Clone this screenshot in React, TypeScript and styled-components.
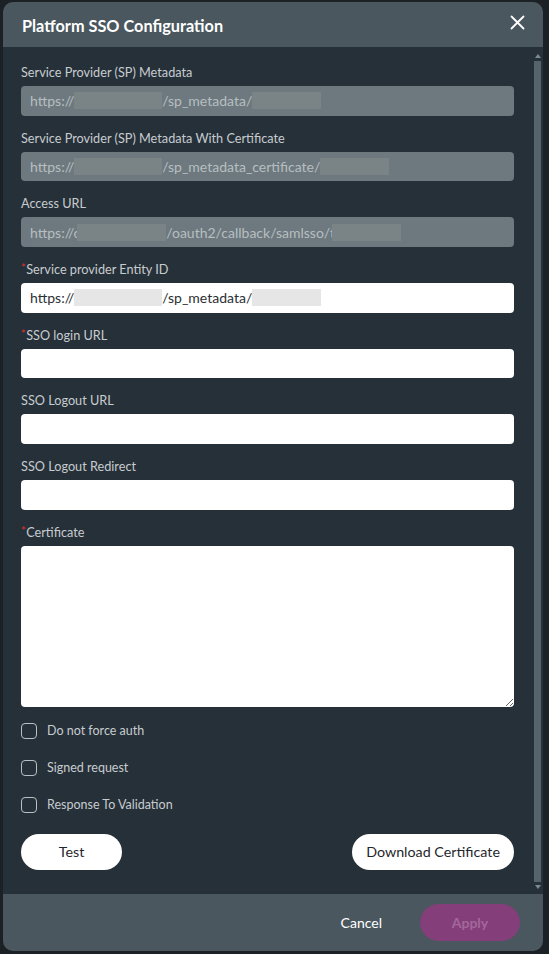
import React from 'react';
import styled, { createGlobalStyle } from 'styled-components';

const GlobalStyle = createGlobalStyle`
  html, body {
    margin: 0;
    padding: 0;
    background-color: #1b2125;
    font-family: Lato, 'Open Sans', 'Liberation Sans', sans-serif;
  }
  * {
    box-sizing: border-box;
  }
`;

interface FieldItem {
  label: string;
  required?: boolean;
  parts?: (string | number)[];
  disabled?: boolean;
}

// numbers stand for blurred-out segments (their width in px, negative = overlaps the letter before)
const fields: FieldItem[] = [
  { label: 'Service Provider (SP) Metadata', disabled: true, parts: ['https://', 88, '/sp_metadata/', 69] },
  {
    label: 'Service Provider (SP) Metadata With Certificate',
    disabled: true,
    parts: ['https://', 88, '/sp_metadata_certificate/', 69],
  },
  { label: 'Access URL', disabled: true, parts: ['https://c', -89, '/oauth2/callback/samlsso/t', -69] },
  { label: 'Service provider Entity ID', required: true, parts: ['https://', 88, '/sp_metadata/', 69] },
  { label: 'SSO login URL', required: true },
  { label: 'SSO Logout URL' },
  { label: 'SSO Logout Redirect' },
];

const options = ['Do not force auth', 'Signed request', 'Response To Validation'];

const CloseIcon = () => (
  <svg width="15" height="15" viewBox="0 0 15 15" fill="none">
    <path d="M1.5 1.5L13.5 13.5M13.5 1.5L1.5 13.5" stroke="#ffffff" strokeWidth="1.8" strokeLinecap="round" />
  </svg>
);

const App = () => {
  return (
    <>
      <GlobalStyle />
      <Page>
        <Modal>
          <Header>
            <Title>Platform SSO Configuration</Title>
            <CloseButton aria-label="Close">
              <CloseIcon />
            </CloseButton>
          </Header>

          <BodyWrap>
            <Body>
              <Fields>
                {fields.map((f) => (
                  <Field key={f.label}>
                    <Label>
                      {f.required && <Required>*</Required>}
                      {f.label}
                    </Label>
                    {f.parts ? (
                      <ValueBox disabled={f.disabled}>
                        {f.parts.map((p, i) =>
                          typeof p === 'number' ? (
                            <Redacted key={i} disabled={f.disabled} overlap={p < 0} style={{ width: Math.abs(p) }} />
                          ) : (
                            <span key={i}>{p}</span>
                          )
                        )}
                      </ValueBox>
                    ) : (
                      <TextInput type="text" />
                    )}
                  </Field>
                ))}
                <Field>
                  <Label>
                    <Required>*</Required>
                    Certificate
                  </Label>
                  <CertificateArea />
                </Field>
              </Fields>

              <OptionList>
                {options.map((o) => (
                  <OptionRow key={o}>
                    <CheckBox type="checkbox" />
                    <OptionText>{o}</OptionText>
                  </OptionRow>
                ))}
              </OptionList>

              <Actions>
                <PillButton wide>Test</PillButton>
                <PillButton>Download Certificate</PillButton>
              </Actions>
            </Body>

            <ScrollTrack>
              <ScrollArrow />
              <ScrollThumb />
              <ScrollArrow down />
            </ScrollTrack>
          </BodyWrap>

          <Footer>
            <CancelButton>Cancel</CancelButton>
            <ApplyButton disabled>Apply</ApplyButton>
          </Footer>
        </Modal>
      </Page>
    </>
  );
};

const Page = styled.div`
  height: 954px;
  padding: 2px 6px 3px 3px;
`;

const Modal = styled.div`
  height: 100%;
  display: flex;
  flex-direction: column;
  background-color: #263038;
  border-radius: 10px;
  overflow: hidden;
`;

const Header = styled.header`
  height: 45px;
  flex-shrink: 0;
  display: flex;
  align-items: center;
  justify-content: space-between;
  padding: 1px 18px 0 19px;
  background-color: #4a575e;
`;

const Title = styled.h2`
  margin: 0;
  color: #ffffff;
  font-size: 16.3px;
  font-weight: 700;
`;

const CloseButton = styled.button`
  display: flex;
  padding: 0;
  margin-top: -6px;
  border: none;
  background: none;
  cursor: pointer;
`;

const BodyWrap = styled.div`
  flex: 1;
  min-height: 0;
  display: flex;
`;

const Body = styled.section`
  flex: 1;
  min-width: 0;
  overflow: hidden;
  padding: 17px 18px 0 18px;
`;

const ScrollTrack = styled.div`
  width: 11px;
  flex-shrink: 0;
  display: flex;
  flex-direction: column;
  align-items: center;
  padding: 7px 2px 5px;
`;

const ScrollThumb = styled.div`
  flex: 1;
  width: 7px;
  margin: 3px 0 3px;
  background-color: #55636b;
`;

const ScrollArrow = styled.span<{ down?: boolean }>`
  width: 0;
  height: 0;
  border-left: 3.5px solid transparent;
  border-right: 3.5px solid transparent;
  border-${({ down }) => (down ? 'top' : 'bottom')}: 4px solid #7d8a91;
`;

const Fields = styled.div`
  display: flex;
  flex-direction: column;
  gap: 14px;
`;

const Field = styled.div`
  display: flex;
  flex-direction: column;
`;

const Label = styled.label`
  display: block;
  height: 16px;
  margin-bottom: 6px;
  line-height: 16px;
  font-size: 12.7px;
  color: #c6ccd0;
`;

const Required = styled.span`
  color: #e0302a;
  font-size: 11px;
  vertical-align: top;
  line-height: 13px;
  margin-right: 0.5px;
`;

const ValueBox = styled.div<{ disabled?: boolean }>`
  height: 29.7px;
  display: flex;
  align-items: center;
  padding: 0 9px;
  border-radius: 4px;
  font-size: 14px;
  white-space: nowrap;
  overflow: hidden;
  background-color: ${({ disabled }) => (disabled ? '#6d797e' : '#ffffff')};
  color: ${({ disabled }) => (disabled ? '#b7bec1' : '#2b2f33')};
`;

const Redacted = styled.span<{ disabled?: boolean; overlap?: boolean }>`
  display: inline-block;
  height: 17px;
  margin-left: ${({ overlap }) => (overlap ? '-3px' : '0')};
  background-color: ${({ disabled }) => (disabled ? '#7a8487' : '#e6e6e6')};
`;

const TextInput = styled.input`
  height: 29.7px;
  padding: 0 9px;
  border: none;
  border-radius: 4px;
  background-color: #ffffff;
  font-family: inherit;
  font-size: 14px;
  outline: none;
`;

const CertificateArea = styled.textarea`
  height: 161px;
  padding: 8px 9px;
  border: none;
  border-radius: 4px;
  background-color: #ffffff;
  font-family: inherit;
  font-size: 14px;
  resize: vertical;
  outline: none;
`;

const OptionList = styled.div`
  display: flex;
  flex-direction: column;
  gap: 21px;
  margin-top: 16px;
`;

const OptionRow = styled.label`
  display: flex;
  align-items: center;
  gap: 10px;
  height: 16px;
`;

const CheckBox = styled.input`
  appearance: none;
  margin: 0;
  width: 16px;
  height: 16px;
  border: 1.3px solid #b9c0c4;
  border-radius: 4px;
  background: transparent;
`;

const OptionText = styled.span`
  font-size: 12.5px;
  color: #c6ccd0;
`;

const Actions = styled.div`
  display: flex;
  justify-content: space-between;
  margin-top: 21px;
`;

const PillButton = styled.button<{ wide?: boolean }>`
  height: 36px;
  min-width: ${({ wide }) => (wide ? '101px' : '0')};
  padding: 0 14px;
  border: none;
  border-radius: 18px;
  background-color: #ffffff;
  color: #1f272c;
  font-family: inherit;
  font-size: 14.3px;
  cursor: pointer;
`;

const Footer = styled.footer`
  height: 57px;
  flex-shrink: 0;
  display: flex;
  align-items: center;
  justify-content: flex-end;
  gap: 38px;
  padding-right: 23px;
  background-color: #4a575e;
`;

const CancelButton = styled.button`
  padding: 0;
  border: none;
  background: none;
  color: #ffffff;
  font-family: inherit;
  font-size: 14px;
  cursor: pointer;
`;

const ApplyButton = styled.button`
  width: 100px;
  height: 37px;
  border: none;
  border-radius: 19px;
  background-color: #843f7b;
  color: #a2679a;
  font-family: inherit;
  font-size: 14px;
  font-weight: 700;
`;

export default App;
